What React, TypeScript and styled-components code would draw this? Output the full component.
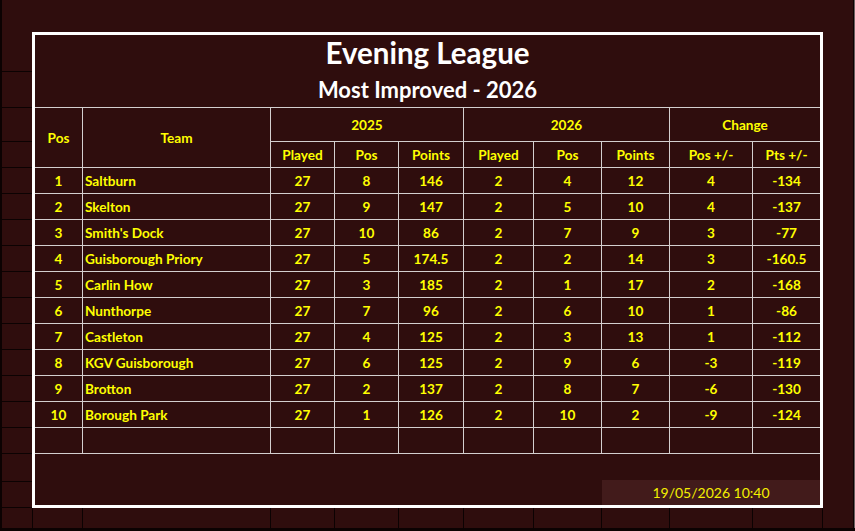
import React from 'react';
import styled, { createGlobalStyle } from 'styled-components';

const BG = '#2f0d0d';
const GRID = '#0c0202';
const LINE = '#d4cfcf';
const YELLOW = '#ffff00';

const GlobalStyle = createGlobalStyle`
  html, body { margin: 0; padding: 0; background: ${BG}; }
  body { font-family: Lato, "Liberation Sans", sans-serif; }
  * { box-sizing: border-box; }
`;

const COLS = [48, 188, 64, 64, 65, 70, 68, 68, 83, 67];
const BOTTOM_COLS = [50, 188, 64, 64, 65, 70, 68, 68, 83, 70];
const GUTTER_LINES = [71, 107, 141, 167, 193, 219, 245, 271, 297, 323, 349, 375, 401, 427, 453, 481, 507];

const Sheet = styled.div`
  display: flex;
  width: 855px;
  height: 531px;
  background: ${BG};
  border-left: 2px solid ${GRID};
  border-bottom: 3px solid ${GRID};
  overflow: hidden;
`;

const LeftGutter = styled.div`
  width: 30px;
  display: flex;
  flex-direction: column;
`;

const GutterCell = styled.div<{ $h: number }>`
  height: ${(p) => p.$h}px;
  flex: none;
  border-bottom: 1px solid ${GRID};
`;

const Main = styled.div`
  width: 791px;
  display: flex;
  flex-direction: column;
`;

const TopSpace = styled.div`
  height: 32px;
`;

const Frame = styled.div`
  width: 791px;
  height: 476px;
  border: 3px solid #ffffff;
  display: grid;
  grid-template-columns: ${COLS.map((c) => c + 'px').join(' ')};
  grid-template-rows: 36px 37px 34px 26px repeat(11, 26px) 26px 25px;
`;

const Title = styled.div<{ $size: number; $line?: boolean }>`
  grid-column: 1 / -1;
  display: flex;
  align-items: center;
  justify-content: center;
  color: #ffffff;
  font-weight: 700;
  font-size: ${(p) => p.$size}px;
  border-bottom: ${(p) => (p.$line ? `1px solid ${LINE}` : 'none')};
  padding-bottom: ${(p) => (p.$line ? '0' : '1px')};
`;

const Cell = styled.div<{ $span?: number; $rows?: number; $left?: boolean; $end?: boolean }>`
  grid-column: span ${(p) => p.$span ?? 1};
  grid-row: span ${(p) => p.$rows ?? 1};
  display: flex;
  align-items: center;
  justify-content: ${(p) => (p.$left ? 'flex-start' : 'center')};
  padding-left: ${(p) => (p.$left ? '2px' : '0')};
  border-right: ${(p) => (p.$end ? 'none' : `1px solid ${LINE}`)};
  border-bottom: 1px solid ${LINE};
  color: ${YELLOW};
  font-weight: 700;
  font-size: 13.6px;
  white-space: nowrap;
`;

const Spacer = styled.div<{ $span: number }>`
  grid-column: span ${(p) => p.$span};
`;

const DateCell = styled.div`
  grid-column: span 3;
  background: #421b1b;
  display: flex;
  align-items: center;
  justify-content: center;
  color: #f4f000;
  font-size: 14px;
  font-weight: 400;
`;

const BottomRow = styled.div`
  flex: 1;
  display: grid;
  grid-template-columns: ${BOTTOM_COLS.map((c) => c + 'px').join(' ')};
  border-left: 1px solid ${GRID};
`;

const BottomCell = styled.div`
  border-right: 1px solid ${GRID};
`;

const RightGutter = styled.div`
  flex: 1;
  border-right: 1px solid #6b6060;
  box-shadow: inset -1px 0 0 ${GRID};
`;

type Row = [string, string, string, string, string, string, string, string, string, string];

const ROWS: Row[] = [
  ['1', 'Saltburn', '27', '8', '146', '2', '4', '12', '4', '-134'],
  ['2', 'Skelton', '27', '9', '147', '2', '5', '10', '4', '-137'],
  ['3', "Smith's Dock", '27', '10', '86', '2', '7', '9', '3', '-77'],
  ['4', 'Guisborough Priory', '27', '5', '174.5', '2', '2', '14', '3', '-160.5'],
  ['5', 'Carlin How', '27', '3', '185', '2', '1', '17', '2', '-168'],
  ['6', 'Nunthorpe', '27', '7', '96', '2', '6', '10', '1', '-86'],
  ['7', 'Castleton', '27', '4', '125', '2', '3', '13', '1', '-112'],
  ['8', 'KGV Guisborough', '27', '6', '125', '2', '9', '6', '-3', '-119'],
  ['9', 'Brotton', '27', '2', '137', '2', '8', '7', '-6', '-130'],
  ['10', 'Borough Park', '27', '1', '126', '2', '10', '2', '-9', '-124'],
];

const gutterHeights = GUTTER_LINES.map((y, i) => (i === 0 ? y + 1 : y - GUTTER_LINES[i - 1]));

export default function App() {
  return (
    <>
      <GlobalStyle />
      <Sheet>
        <LeftGutter>
          {gutterHeights.map((h, i) => (
            <GutterCell key={i} $h={h} />
          ))}
        </LeftGutter>
        <Main>
          <TopSpace />
          <Frame>
            <Title $size={29.5}>Evening League</Title>
            <Title $size={22} $line>
              Most Improved - 2026
            </Title>

            <Cell $rows={2}>Pos</Cell>
            <Cell $rows={2}>Team</Cell>
            <Cell $span={3}>2025</Cell>
            <Cell $span={3}>2026</Cell>
            <Cell $span={2} $end>
              Change
            </Cell>
            <Cell>Played</Cell>
            <Cell>Pos</Cell>
            <Cell>Points</Cell>
            <Cell>Played</Cell>
            <Cell>Pos</Cell>
            <Cell>Points</Cell>
            <Cell>Pos +/-</Cell>
            <Cell $end>Pts +/-</Cell>

            {ROWS.map((r) =>
              r.map((v, j) => (
                <Cell key={r[0] + '-' + j} $left={j === 1} $end={j === 9}>
                  {v}
                </Cell>
              ))
            )}
            {COLS.map((_, j) => (
              <Cell key={'blank-' + j} $end={j === 9} />
            ))}

            <Spacer $span={10} />
            <Spacer $span={7} />
            <DateCell>19/05/2026 10:40</DateCell>
          </Frame>
          <BottomRow>
            {BOTTOM_COLS.map((_, i) => (
              <BottomCell key={i} />
            ))}
          </BottomRow>
        </Main>
        <RightGutter />
      </Sheet>
    </>
  );
}
